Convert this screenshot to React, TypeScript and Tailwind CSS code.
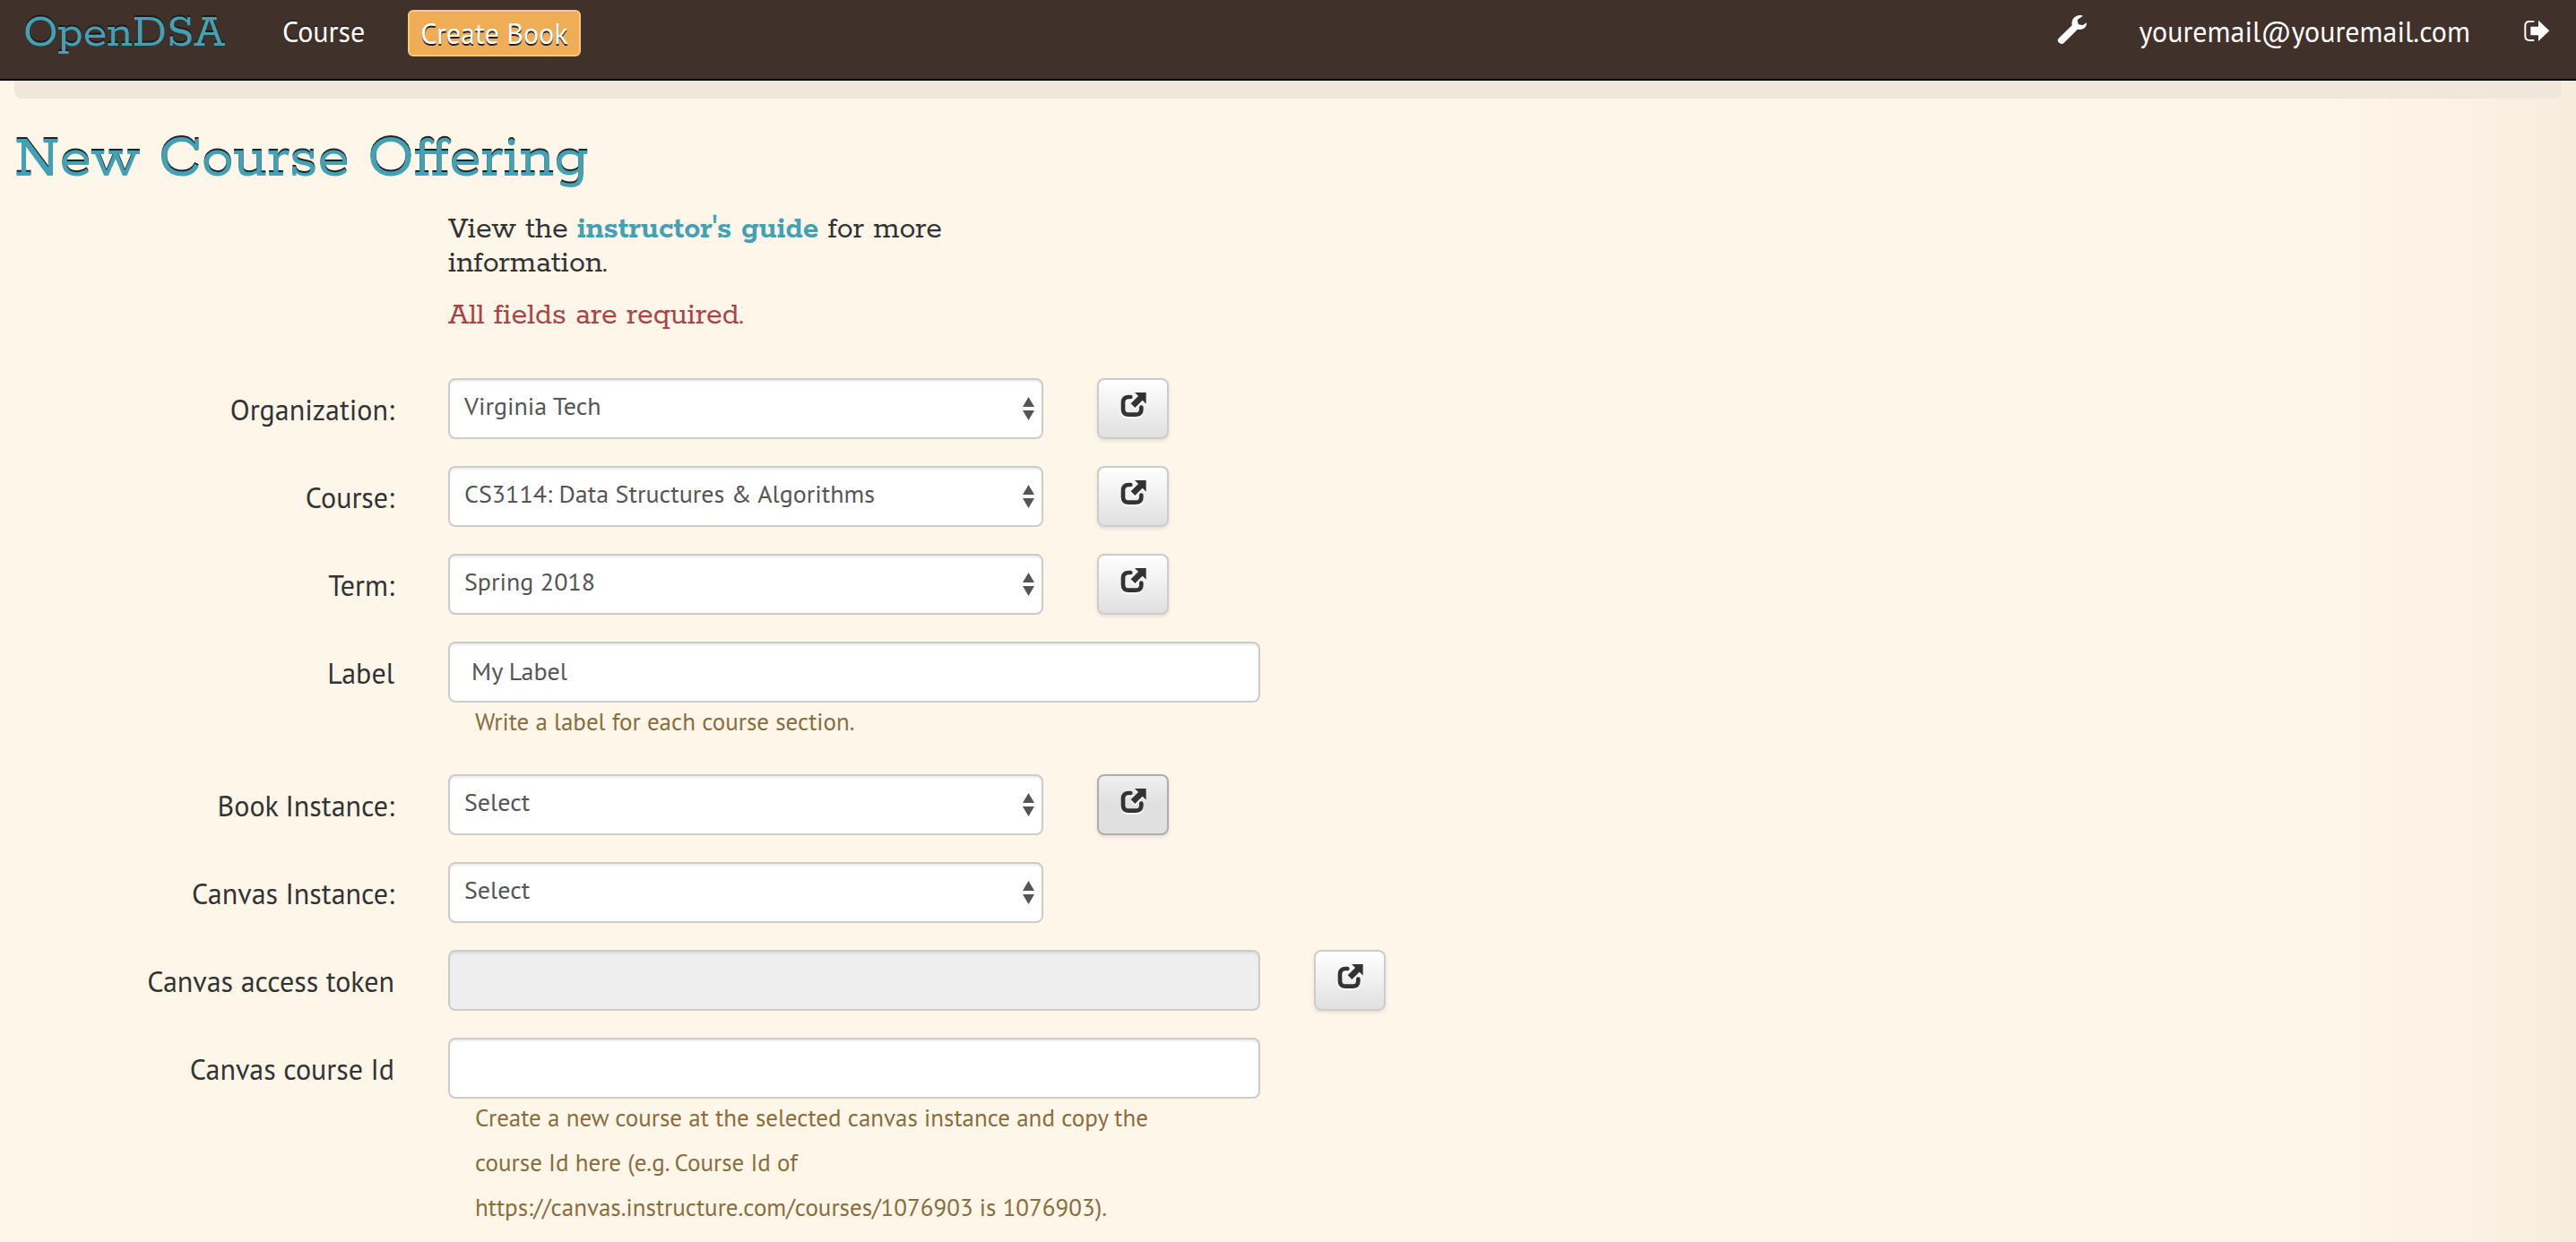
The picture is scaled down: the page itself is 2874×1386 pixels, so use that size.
import type { ReactNode } from 'react';

function ShareIcon() {
  return (
    <svg viewBox="0 0 120 120" className="h-10 w-10 text-[#333] drop-shadow-[0_2px_0_#fff]" aria-hidden="true">
      <path
        d="M52 39H46Q27 39 27 58V80Q27 98 46 98H69Q88 98 88 80V74"
        fill="none"
        stroke="currentColor"
        strokeWidth="14"
        strokeLinecap="round"
      />
      <path d="M104 24V62L92 50L67 75L53 61L78 36L66 24Z" fill="currentColor" />
    </svg>
  );
}

function WrenchIcon() {
  return (
    <svg viewBox="0 0 180 180" className="h-[60px] w-[60px]" aria-hidden="true">
      <path
        d="M46 115L92 70C88 50 103 34 122 36L129 38L110 51L113 66L127 70L141 61C142 78 128 87 111 83L64 130Q57 135 50 129L46 125Q42 120 46 115Z"
        fill="#fff"
      />
    </svg>
  );
}

function LogoutIcon() {
  return (
    <svg viewBox="0 0 210 150" className="h-[50px] w-[70px]" aria-hidden="true">
      <path d="M82 42H66Q52 42 52 56V91Q52 105 66 105H82" fill="none" stroke="#fff" strokeWidth="6" />
      <path d="M70 59H96V38L133 73L96 108V88H70Z" fill="#fff" />
    </svg>
  );
}

function Arrows() {
  return (
    <svg viewBox="0 0 26 52" className="pointer-events-none absolute top-[21px] right-[10px] h-[26px] w-[13px]" aria-hidden="true">
      <path d="M13 0L26 22H0ZM0 30H26L13 52Z" fill="#555" />
    </svg>
  );
}

function Row({ id, label, children }: { id: string; label: string; children: ReactNode }) {
  return (
    <div className="mb-[30px] flex items-start">
      <label htmlFor={id} className="w-[424px] shrink-0 pt-3 text-right text-[32px] leading-[46px]">
        {label}
      </label>
      <div className="ml-[60px] flex items-start gap-[60px]">{children}</div>
    </div>
  );
}

function Select({ id, value }: { id: string; value: string }) {
  return (
    <div className="relative w-[664px]">
      <select
        id={id}
        defaultValue={value}
        className="block h-[68px] w-full appearance-none rounded-lg border-2 border-[#ccc] bg-white pr-10 pb-1.5 pl-4 text-[28px] text-[#555] shadow-[inset_0_2px_2px_rgba(0,0,0,0.075)]"
      >
        <option>{value}</option>
      </select>
      <Arrows />
    </div>
  );
}

function TextBox({ id, value = '', disabled = false }: { id: string; value?: string; disabled?: boolean }) {
  return (
    <input
      id={id}
      type="text"
      defaultValue={value}
      disabled={disabled}
      className="block h-[68px] w-[906px] rounded-lg border-2 border-[#ccc] bg-white px-6 pb-1 text-[28px] text-[#555] shadow-[inset_0_2px_2px_rgba(0,0,0,0.075)] disabled:bg-[#eee]"
    />
  );
}

function OpenButton({ label, active = false }: { label: string; active?: boolean }) {
  return (
    <button
      type="button"
      aria-label={label}
      className={
        'flex h-[68px] w-20 items-start justify-center rounded-lg border-2 pt-[6px] shadow-[0_2px_4px_rgba(0,0,0,0.1)] ' +
        (active
          ? 'border-[#adadad] bg-linear-to-b from-[#f0f0f0] via-[#e0e0e0] to-[#e0e0e0]'
          : 'border-[#ccc] bg-linear-to-b from-white to-[#e0e0e0]')
      }
    >
      <ShareIcon />
    </button>
  );
}

export default function App() {
  return (
    <div className="h-screen overflow-hidden bg-[#fff6ea] bg-linear-to-r from-[#fff6ea] from-90% to-[#f7eddf] font-['PT_Sans','Lato',sans-serif] text-[#333]">
      <header className="flex h-[90px] items-start justify-between border-b-2 border-black bg-[#41312b] text-[32px] leading-10 text-white">
        <nav className="flex h-[70px] items-center pl-[26px]">
          <a href="#home" className="pt-1.5 font-['Rokkitt','DejaVu_Serif',serif] text-[54px] leading-[64px] text-[#42a1b4] [text-shadow:0_-2px_0_rgba(0,0,0,0.5)]">
            OpenDSA
          </a>
          <a href="#course" className="ml-16 [text-shadow:0_-2px_0_rgba(0,0,0,0.25)]">Course</a>
          <a
            href="#book"
            className="mt-1 ml-12 rounded-md border-2 border-[#fbc980] bg-[#efae56] px-3 py-1 [text-shadow:0_2px_0_#222]"
          >
            Create Book
          </a>
        </nav>
        <div className="flex h-[70px] items-center">
          <a href="#settings" aria-label="Settings"><WrenchIcon /></a>
          <a href="#profile" className="ml-[46px]">youremail@youremail.com</a>
          <a href="#logout" aria-label="Log out" className="ml-11 pr-1"><LogoutIcon /></a>
        </div>
      </header>

      <div className="mx-4 h-5 rounded-b-lg bg-[#f0e6db]" />

      <main className="px-4">
        <h1 className="mt-7 font-['Rokkitt','DejaVu_Serif',serif] text-[72px] leading-[80px] text-[#42a1b4] [text-shadow:0_-2px_0_#222]">
          New Course Offering
        </h1>
        <div className="mt-5 ml-[484px] w-[604px] font-['Rokkitt','DejaVu_Serif',serif] text-[36px] leading-[38px]">
          <p>
            View the{' '}
            <a href="#guide" className="font-bold text-[#42a1b4]">instructor's guide</a> for more information.
          </p>
          <p className="mt-5 text-[#a94442]">All fields are required.</p>
        </div>

        <form className="mt-[50px]">
          <Row id="organization" label="Organization:">
            <Select id="organization" value="Virginia Tech" />
            <OpenButton label="Add organization" />
          </Row>
          <Row id="course" label="Course:">
            <Select id="course" value="CS3114: Data Structures & Algorithms" />
            <OpenButton label="Add course" />
          </Row>
          <Row id="term" label="Term:">
            <Select id="term" value="Spring 2018" />
            <OpenButton label="Add term" />
          </Row>
          <Row id="label" label="Label">
            <div>
              <TextBox id="label" value="My Label" />
              <p className="-mt-1 mb-1 ml-[30px] text-[27px] leading-[50px] text-[#8a6d3b]">Write a label for each course section.</p>
            </div>
          </Row>
          <Row id="book" label="Book Instance:">
            <Select id="book" value="Select" />
            <OpenButton label="Add book instance" active />
          </Row>
          <Row id="canvas" label="Canvas Instance:">
            <Select id="canvas" value="Select" />
          </Row>
          <Row id="token" label="Canvas access token">
            <TextBox id="token" disabled />
            <OpenButton label="Add access token" />
          </Row>
          <Row id="courseid" label="Canvas course Id">
            <div>
              <TextBox id="courseid" />
              <p className="-mt-1 ml-[30px] w-[790px] text-[27px] leading-[50px] text-[#8a6d3b]">
                Create a new course at the selected canvas instance and copy the course Id here (e.g. Course Id of
                https://canvas.instructure.com/courses/1076903 is 1076903).
              </p>
            </div>
          </Row>
        </form>
      </main>
    </div>
  );
}
